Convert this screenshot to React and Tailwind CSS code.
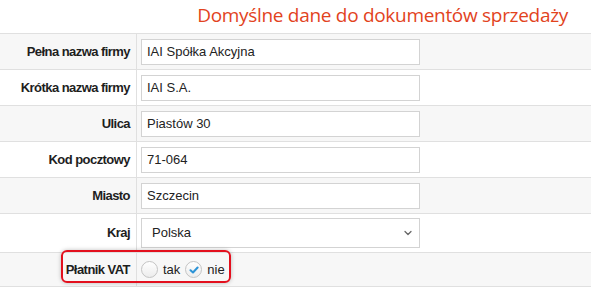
import { ChevronDown } from "lucide-react";

const rows = [
  { label: "Pełna nazwa firmy", value: "IAI Spółka Akcyjna" },
  { label: "Krótka nazwa firmy", value: "IAI S.A." },
  { label: "Ulica", value: "Piastów 30" },
  { label: "Kod pocztowy", value: "71-064" },
  { label: "Miasto", value: "Szczecin" },
];

const Label = ({ children }) => (
  <div className="w-[137px] shrink-0 self-stretch flex items-center justify-end pr-[6px] border-r border-[#e0e0e0] font-bold text-[13px] tracking-[-0.55px] text-[#1e1e1e]">
    {children}
  </div>
);

const Radio = ({ checked, label }) => (
  <label className="flex items-center gap-[5px] text-[13px] text-[#222]">
    <span className="w-[17px] h-[17px] rounded-full border border-[#c4c4c4] bg-gradient-to-b from-white to-[#ececec] flex items-center justify-center">
      {checked && (
        <svg width="10" height="8" viewBox="0 0 10 8">
          <path
            d="M1.5 4.2 L4 6.5 L8.6 1.5"
            fill="none"
            stroke="#2c93d6"
            strokeWidth="2"
            strokeLinecap="round"
            strokeLinejoin="round"
          />
        </svg>
      )}
    </span>
    {label}
  </label>
);

export default function App() {
  return (
    <div className="w-[591px] h-[287px] bg-white overflow-hidden font-['Liberation_Sans',Arial,sans-serif]">
      <div className="h-[33px] flex items-center justify-end pr-[23px]">
        <h1 className="font-['Open_Sans',sans-serif] text-[19px] tracking-[-0.3px] text-[#e2431d] leading-none pb-[2px]">
          Domyślne dane do dokumentów sprzedaży
        </h1>
      </div>

      <div className="border-t border-[#e0e0e0]">
        {rows.map((row, i) => (
          <div
            key={row.label}
            className={`h-[36px] flex items-center border-b border-[#e0e0e0] ${
              i % 2 === 0 ? "bg-[#f7f7f7]" : "bg-white"
            }`}
          >
            <Label>{row.label}</Label>
            <input
              type="text"
              readOnly
              value={row.value}
              className="ml-[4px] w-[279px] h-[26px] bg-white border border-[#d3d3d3] px-[5px] text-[13px] text-[#222] outline-none"
            />
          </div>
        ))}

        <div className="h-[39px] flex items-center border-b border-[#e0e0e0] bg-white">
          <Label>Kraj</Label>
          <div className="relative ml-[4px] w-[279px] h-[30px] bg-white border border-[#d3d3d3] flex items-center pl-[10px] text-[13px] text-[#222]">
            Polska
            <ChevronDown
              className="absolute right-[5px] top-1/2 -translate-y-1/2 text-[#666]"
              size={12}
              strokeWidth={2.5}
            />
          </div>
        </div>

        <div className="relative h-[34px] flex items-center border-b border-[#e0e0e0] bg-[#f7f7f7]">
          <Label>Płatnik VAT</Label>
          <div className="ml-[4px] flex items-center gap-[5px]">
            <Radio label="tak" />
            <Radio checked label="nie" />
          </div>
          <div className="absolute left-[61px] top-[-3px] w-[170px] h-[33px] rounded-[6px] border-2 border-[#e3101e] shadow-[0_0_4px_rgba(0,0,0,0.25)] pointer-events-none" />
        </div>
      </div>
    </div>
  );
}
